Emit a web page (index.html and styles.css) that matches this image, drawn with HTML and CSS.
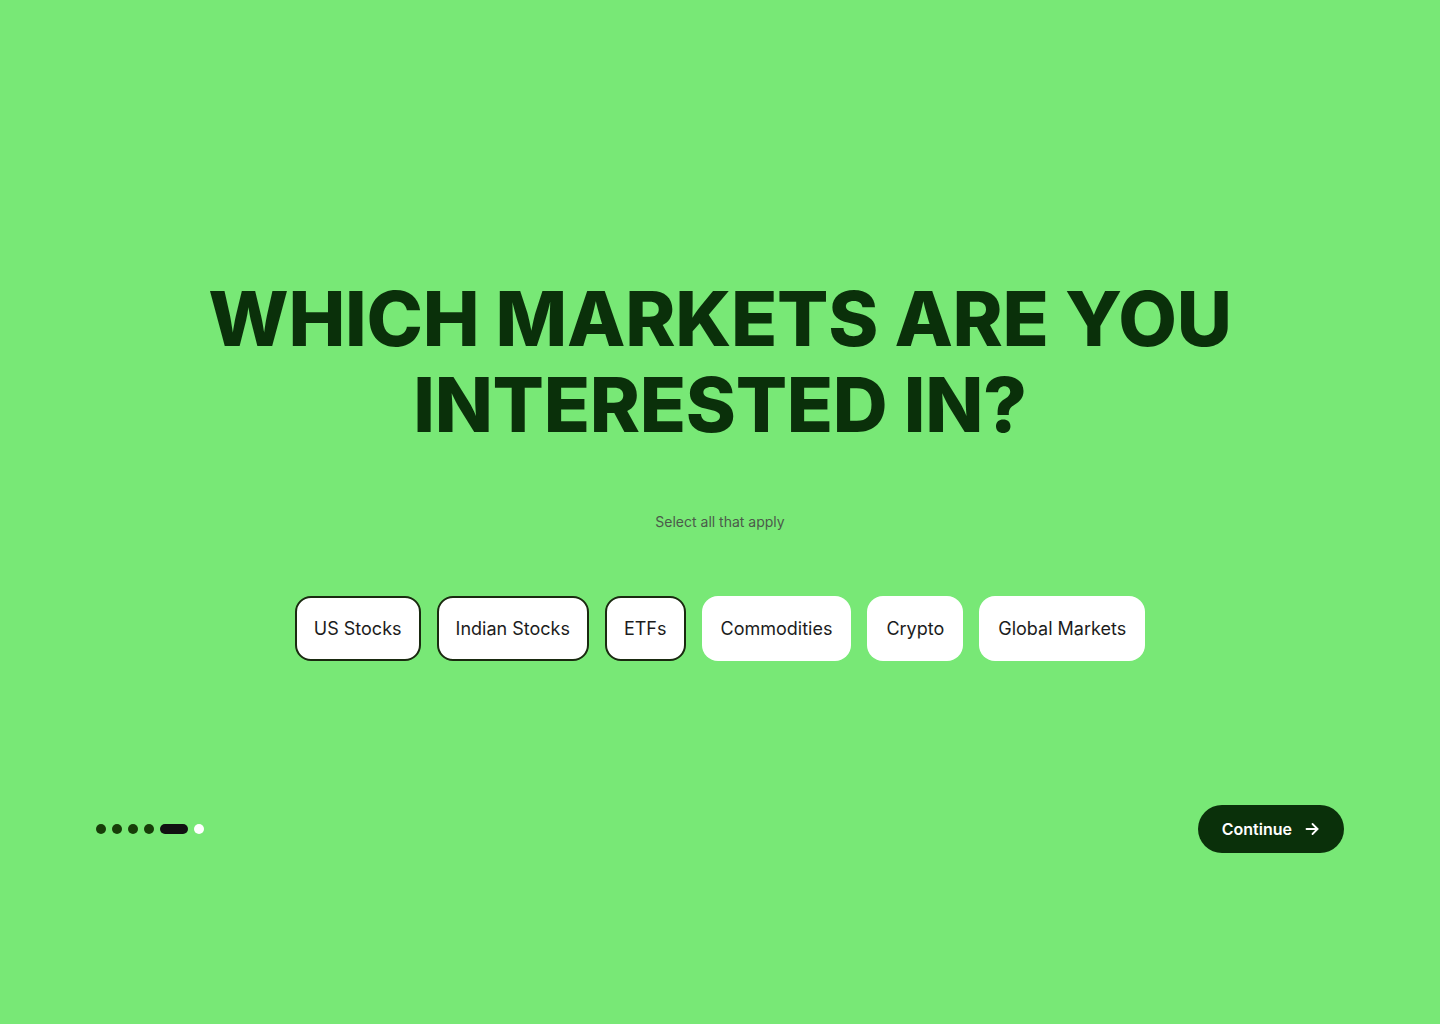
FILE: index.html
```html
<!DOCTYPE html>
<html>
<head>
  <title>Markets</title>
  <meta charset="UTF-8">
  <link rel="stylesheet" href="styles.css">
</head>
<body>
  <main class="step">
    <h1 class="step-title">Which markets are you interested in?</h1>
    <p class="step-hint">Select all that apply</p>
    <div class="chips">
      <button class="chip selected">US Stocks</button>
      <button class="chip selected">Indian Stocks</button>
      <button class="chip selected">ETFs</button>
      <button class="chip">Commodities</button>
      <button class="chip">Crypto</button>
      <button class="chip">Global Markets</button>
    </div>
  </main>
  <footer class="step-footer">
    <div class="progress">
      <span class="dot"></span>
      <span class="dot"></span>
      <span class="dot"></span>
      <span class="dot"></span>
      <span class="dot current"></span>
      <span class="dot next"></span>
    </div>
    <button class="continue">
      Continue
      <svg width="16" height="16" viewBox="0 0 16 16" fill="none" stroke="currentColor" stroke-width="1.8" stroke-linecap="round" stroke-linejoin="round">
        <path d="M2.5 8h11"/>
        <path d="M8.5 3l5 5-5 5"/>
      </svg>
    </button>
  </footer>
</body>
</html>
```

FILE: styles.css
```css
body {
  margin: 0;
  min-height: 1024px;
  background-color: #78e876;
  font-family: Inter, "Noto Sans", sans-serif;
  color: #1c1c1c;
}

.step {
  display: flex;
  flex-direction: column;
  align-items: center;
  padding-top: 275px;
}

.step-title {
  margin: 0;
  max-width: 1100px;
  font-size: 76px;
  font-weight: 800;
  line-height: 86px;
  letter-spacing: -0.3px;
  text-align: center;
  text-transform: uppercase;
  color: #0a300a;
}

.step-hint {
  margin: 66px 0 0;
  font-size: 14px;
  color: #4b5a4a;
}

.chips {
  display: flex;
  gap: 16px;
  margin-top: 66px;
}

.chip {
  height: 65px;
  padding: 0 17px;
  border: 2px solid transparent;
  border-radius: 16px;
  background-color: #fff;
  font-family: inherit;
  font-size: 18px;
  color: #1c1c1c;
  cursor: pointer;
}

.chip.selected {
  border-color: #1a2a10;
}

.step-footer {
  display: flex;
  justify-content: space-between;
  align-items: center;
  padding: 0 96px;
  margin-top: 144px;
}

.progress {
  display: flex;
  gap: 6px;
}

.dot {
  width: 10px;
  height: 10px;
  border-radius: 5px;
  background-color: #173d08;
}

.dot.current {
  width: 28px;
  background-color: #111;
}

.dot.next {
  background-color: #fff;
}

.continue {
  display: flex;
  align-items: center;
  gap: 12px;
  height: 48px;
  padding: 0 24px;
  border: none;
  border-radius: 24px;
  background-color: #0a300a;
  font-family: inherit;
  font-size: 16px;
  font-weight: 600;
  color: #fff;
  cursor: pointer;
}
```
